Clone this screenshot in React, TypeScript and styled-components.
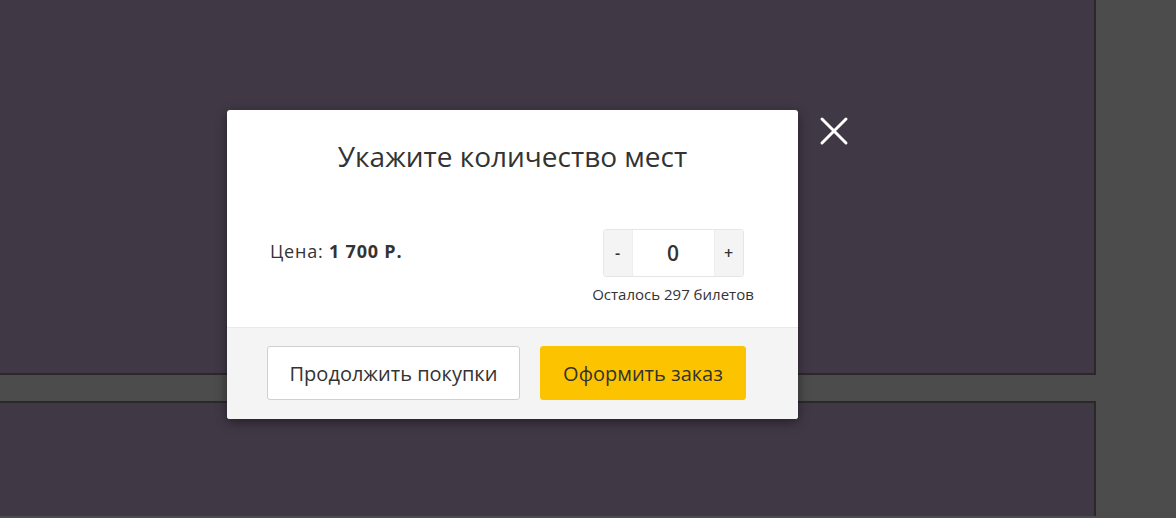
import React, { useState } from "react";
import styled, { createGlobalStyle } from "styled-components";

const Global = createGlobalStyle`
  html, body { margin: 0; padding: 0; }
  body {
    background: #4c4c4c;
    font-family: "Open Sans", "Noto Sans", sans-serif;
    overflow: hidden;
    width: 1176px;
    height: 518px;
  }
  * { box-sizing: border-box; }
`;

const Page = styled.div`
  display: flex;
  flex-direction: column;
  gap: 26px;
  width: 1098px;
  height: 518px;
  overflow: hidden;
  margin-top: -2px;
  margin-left: -2px;
`;

const Card = styled.div<{ $h: number }>`
  flex: 0 0 ${(p) => p.$h}px;
  background: #413846;
  border: 2px solid #2b282c;
`;

const Modal = styled.div`
  position: absolute;
  left: 227px;
  top: 110px;
  width: 571px;
  background: #fff;
  border-radius: 3px;
  box-shadow: 0 3px 12px rgba(0, 0, 0, 0.45);
  overflow: hidden;
`;

const Body = styled.div`
  padding: 27px 43px 23px 43px;
`;

const Title = styled.h2`
  margin: 0;
  font-size: 28px;
  line-height: 38px;
  font-weight: 400;
  color: #333;
  text-align: center;
`;

const Row = styled.div`
  display: flex;
  justify-content: space-between;
  align-items: flex-start;
  margin-top: 54px;
`;

const Price = styled.div`
  font-size: 18px;
  line-height: 24px;
  letter-spacing: 0.8px;
  color: #333;
  margin-top: 10px;
  b { font-weight: 700; }
`;

const QtyCol = styled.div`
  display: flex;
  flex-direction: column;
  align-items: center;
  gap: 7px;
  width: 164px;
`;

const Stepper = styled.div`
  display: flex;
  height: 48px;
  width: 141px;
  border: 1px solid #e6e6e6;
  border-radius: 3px;
  overflow: hidden;
`;

const StepBtn = styled.button`
  width: 28px;
  border: none;
  background: #f4f4f4;
  color: #333;
  font-family: inherit;
  font-size: 16px;
  font-weight: 600;
  padding: 0;
  cursor: pointer;
`;

const Qty = styled.input`
  flex: 1;
  min-width: 0;
  border: none;
  border-left: 1px solid #eee;
  border-right: 1px solid #eee;
  text-align: center;
  font-family: inherit;
  font-size: 21px;
  font-weight: 600;
  color: #333;
  outline: none;
`;

const Left = styled.div`
  font-size: 15px;
  line-height: 20px;
  color: #333;
  white-space: nowrap;
`;

const Footer = styled.div`
  background: #f4f4f4;
  border-top: 1px solid #e8e8e8;
  height: 92px;
  padding: 18px 0 0 40px;
  display: flex;
  gap: 20px;
`;

const Button = styled.button<{ $primary?: boolean; $w: number }>`
  height: 54px;
  width: ${(p) => p.$w}px;
  border-radius: 3px;
  border: 1px solid ${(p) => (p.$primary ? "#fcc400" : "#d0d0d0")};
  background: ${(p) => (p.$primary ? "#fcc400" : "#fff")};
  color: #333;
  font-family: inherit;
  font-size: 20px;
  padding: 0;
  cursor: pointer;
`;

const Close = styled.button`
  position: absolute;
  left: 818px;
  top: 115px;
  width: 32px;
  height: 32px;
  border: none;
  background: transparent;
  padding: 0;
  cursor: pointer;
`;

export default function App() {
  const [qty, setQty] = useState(0);
  return (
    <>
      <Global />
      <Page>
        <Card $h={377} />
        <Card $h={200} />
      </Page>
      <Modal>
        <Body>
          <Title>Укажите количество мест</Title>
          <Row>
            <Price>
              Цена: <b>1 700 Р.</b>
            </Price>
            <QtyCol>
              <Stepper>
                <StepBtn onClick={() => setQty(Math.max(0, qty - 1))}>-</StepBtn>
                <Qty value={qty} readOnly />
                <StepBtn onClick={() => setQty(Math.min(297, qty + 1))}>+</StepBtn>
              </Stepper>
              <Left>Осталось 297 билетов</Left>
            </QtyCol>
          </Row>
        </Body>
        <Footer>
          <Button $w={253}>Продолжить покупки</Button>
          <Button $w={206} $primary>
            Оформить заказ
          </Button>
        </Footer>
      </Modal>
      <Close aria-label="Закрыть">
        <svg width="32" height="32" viewBox="0 0 32 32">
          <path d="M4 4 L28 28 M28 4 L4 28" stroke="#fff" strokeWidth="3" strokeLinecap="round" />
        </svg>
      </Close>
    </>
  );
}
